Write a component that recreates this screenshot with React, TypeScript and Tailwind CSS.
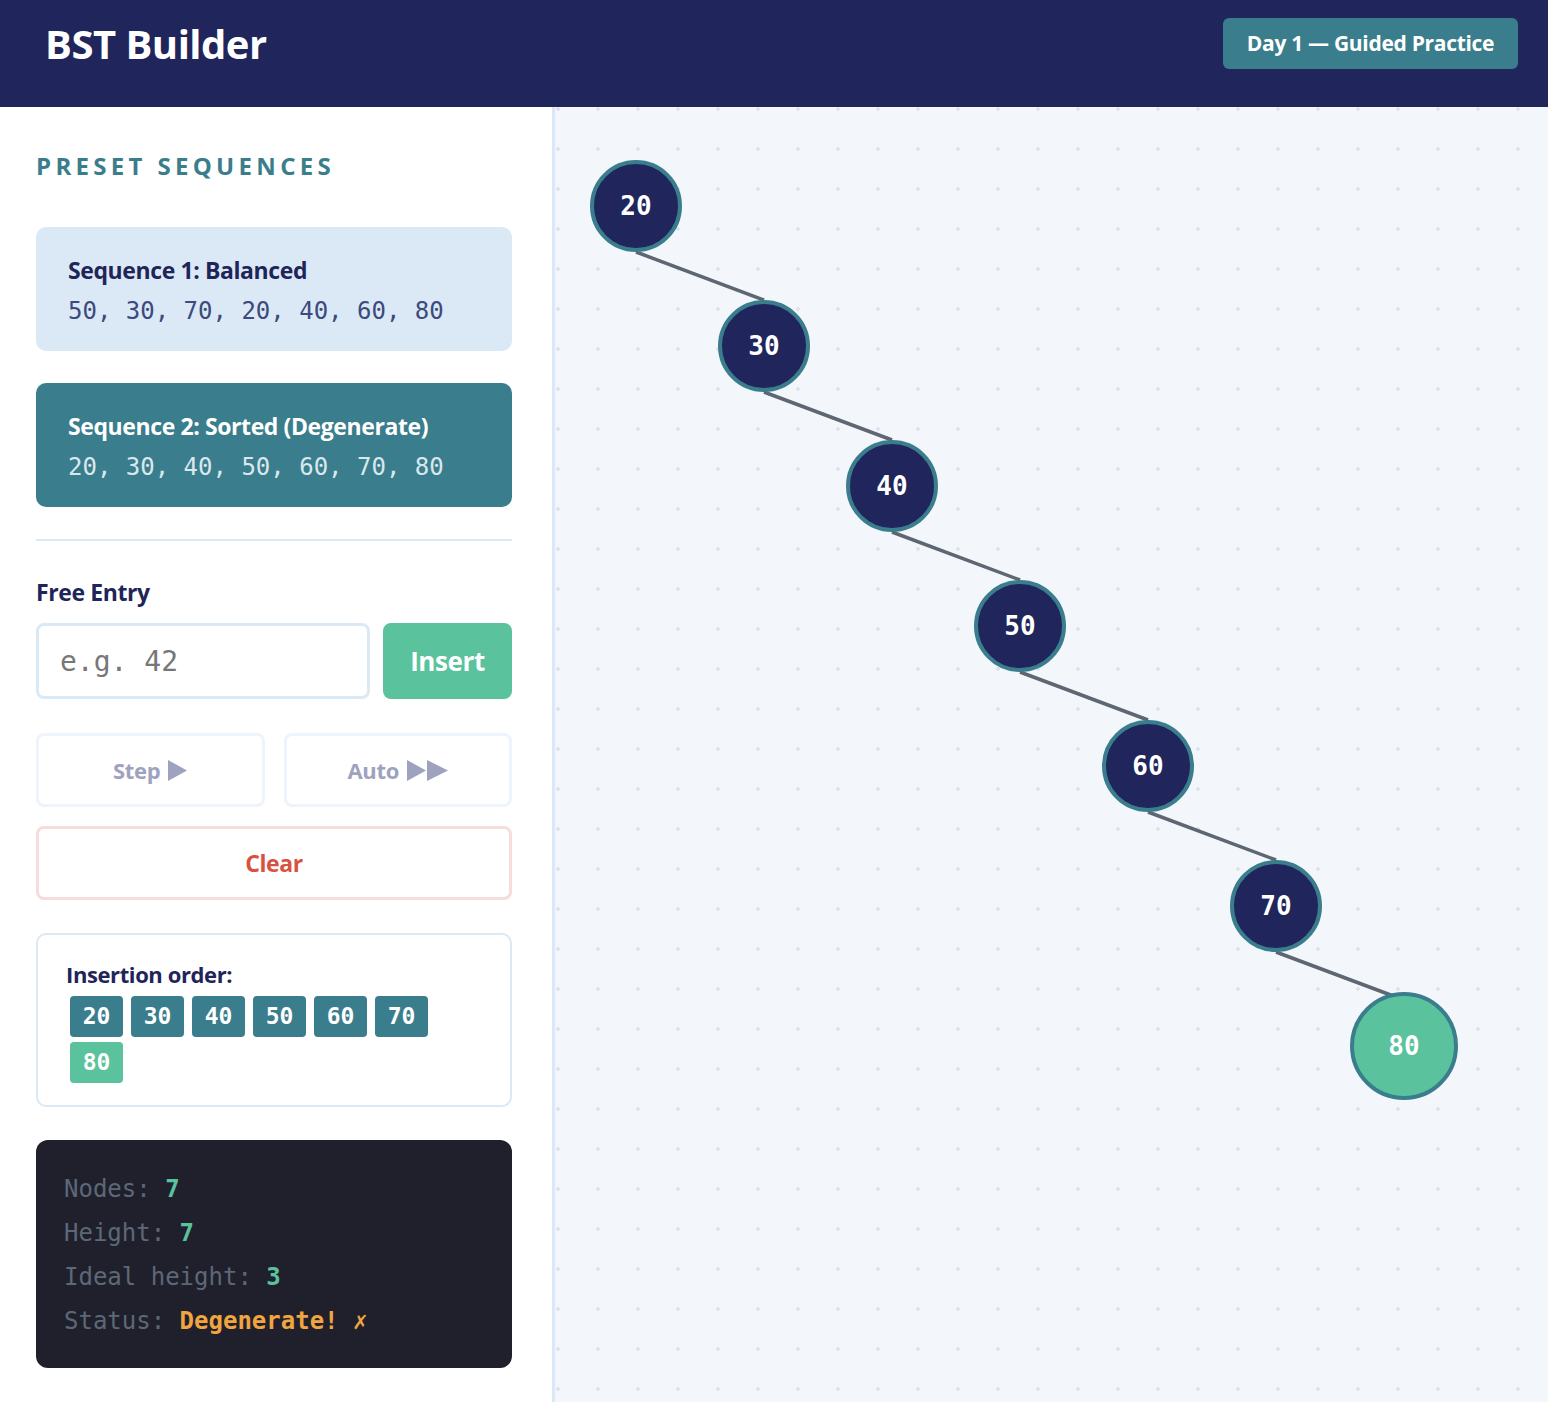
const sans = { fontFamily: '"Open Sans", Lato, sans-serif' };
const mono = { fontFamily: '"DejaVu Sans Mono", "Liberation Mono", monospace' };

type TreeNode = { value: number; x: number; y: number; latest?: boolean };

// node centres on the canvas, radius 46 (the newest one is scaled up)
const R = 46;
const nodes: TreeNode[] = [
  { value: 20, x: 81, y: 99 },
  { value: 30, x: 209, y: 239 },
  { value: 40, x: 337, y: 379 },
  { value: 50, x: 465, y: 519 },
  { value: 60, x: 593, y: 659 },
  { value: 70, x: 721, y: 799 },
  { value: 80, x: 849, y: 939, latest: true },
];

const order = [20, 30, 40, 50, 60, 70, 80];

const PlayIcon = ({ w = 20 }: { w?: number }) => (
  <svg width={w} height="21" viewBox={`0 0 ${w} 21`} className="fill-[#9ea2be]">
    <polygon points={`0,0 ${w},10.5 0,21`} />
  </svg>
);

const Header = () => (
  <header className="flex h-[107px] items-start justify-between bg-[#20255b] pl-[45px] pr-[30px] pt-[18px]">
    <div className="flex h-[51px] items-center">
      <h1 className="text-[40px] font-bold leading-none tracking-[-0.5px] text-white">BST Builder</h1>
    </div>
    <div className="flex h-[51px] w-[295px] items-center justify-center rounded-md bg-[#3a7d8c] text-[21px] font-bold tracking-[-0.3px] text-white">
      Day 1 — Guided Practice
    </div>
  </header>
);

const Sidebar = () => (
  <aside className="w-[555px] shrink-0 border-r-[3px] border-[#dbe9f5] bg-white pb-8 pl-9 pr-10 pt-[44px]">
    <h2 className="text-[24px] font-bold leading-[30px] tracking-[0.18em] text-[#3a7d8c]">PRESET SEQUENCES</h2>

    <div className="mt-[46px] flex flex-col gap-8">
      <div className="h-[124px] rounded-[10px] bg-[#dbe9f6] px-8 pt-7">
        <div className="text-[23px] font-bold leading-[30px] tracking-[-0.4px] text-[#1f2559]">Sequence 1: Balanced</div>
        <div style={mono} className="mt-[11px] text-[24px] leading-[30px] text-[#3d4a7c]">
          50, 30, 70, 20, 40, 60, 80
        </div>
      </div>
      <div className="h-[124px] rounded-[10px] bg-[#3a7d8c] px-8 pt-7">
        <div className="text-[23px] font-bold leading-[30px] tracking-[-0.4px] text-white">Sequence 2: Sorted (Degenerate)</div>
        <div style={mono} className="mt-[11px] text-[24px] leading-[30px] text-[#d9e8ec]">
          20, 30, 40, 50, 60, 70, 80
        </div>
      </div>
    </div>

    <div className="mt-8 h-[2px] bg-[#dbe9f5]" />

    <label className="mt-[36px] block text-[23px] font-bold leading-[30px] tracking-[-0.4px] text-[#1f2559]">Free Entry</label>
    <div className="mt-[16px] flex gap-[13px]">
      <input
        style={mono}
        placeholder="e.g. 42"
        className="h-[76px] min-w-0 flex-1 rounded-lg border-[3px] border-[#dbe9f5] px-[21px] text-[28px] text-[#1f2559] outline-none placeholder:text-[#777]"
      />
      <button className="h-[76px] w-[129px] rounded-lg bg-[#5ac29d] text-[26px] font-bold tracking-[-0.4px] text-white">Insert</button>
    </div>

    <div className="mt-[34px] grid grid-cols-2 gap-[19px]">
      <button className="flex h-[74px] items-center justify-center gap-2 rounded-lg border-[3px] border-[#eef4fb] text-[22px] font-bold tracking-[-0.3px] text-[#9ea2be]">
        Step <PlayIcon w={19} />
      </button>
      <button className="flex h-[74px] items-center justify-center gap-2 rounded-lg border-[3px] border-[#eef4fb] text-[22px] font-bold tracking-[-0.3px] text-[#9ea2be]">
        Auto
        <span className="flex gap-[1px]">
          <PlayIcon w={19} />
          <PlayIcon w={21} />
        </span>
      </button>
    </div>

    <button className="mt-[19px] flex h-[74px] w-full items-center justify-center rounded-lg border-[3px] border-[#f6dcdc] text-[23px] font-bold tracking-[-0.4px] text-[#d9523f]">
      Clear
    </button>

    <div className="mt-[33px] rounded-[10px] border-2 border-[#dbe9f5] pb-[22px] pl-7 pr-7 pt-[26px]">
      <div className="text-[22px] font-bold leading-[26px] tracking-[-0.4px] text-[#1f2559]">Insertion order:</div>
      <div className="mt-[9px] flex flex-wrap gap-x-2 gap-y-[5px] pl-1">
        {order.map((v, i) => (
          <span
            key={v}
            style={mono}
            className={
              'flex h-[41px] w-[53px] items-center justify-center rounded text-[23px] font-bold text-white ' +
              (i === order.length - 1 ? 'bg-[#5ac29d]' : 'bg-[#3a7d8c]')
            }
          >
            {v}
          </span>
        ))}
      </div>
    </div>

    <div style={mono} className="mt-[33px] rounded-xl bg-[#20202d] px-7 pb-[25px] pt-[27px] text-[24px] leading-[44px] text-[#5d6877]">
      <div>
        Nodes: <span className="font-bold text-[#5ac29d]">7</span>
      </div>
      <div>
        Height: <span className="font-bold text-[#5ac29d]">7</span>
      </div>
      <div>
        Ideal height: <span className="font-bold text-[#5ac29d]">3</span>
      </div>
      <div>
        Status: <span className="font-bold text-[#f0a540]">Degenerate! ✗</span>
      </div>
    </div>
  </aside>
);

const Canvas = () => (
  <main className="relative flex-1 overflow-hidden bg-[#f3f7fb] bg-[radial-gradient(circle,#dfe4ec_1.6px,transparent_2px)] bg-[length:40px_40px] bg-[position:-17px_-18px]">
    <svg className="absolute inset-0 h-full w-full">
      {nodes.slice(1).map((n, i) => (
        <line
          key={n.value}
          x1={nodes[i].x}
          y1={nodes[i].y + R}
          x2={n.x}
          y2={n.y - R}
          stroke="#5f6673"
          strokeWidth="3.5"
        />
      ))}
    </svg>
    {nodes.map((n) => {
      const size = n.latest ? 108 : R * 2;
      return (
        <div
          key={n.value}
          style={{ left: n.x - size / 2, top: n.y - size / 2, width: size, height: size, ...mono }}
          className={
            'absolute flex items-center justify-center rounded-full border-4 border-[#3a7d8c] text-[26px] font-bold text-white ' +
            (n.latest ? 'bg-[#5ac29d]' : 'bg-[#20255b]')
          }
        >
          {n.value}
        </div>
      );
    })}
  </main>
);

export default function App() {
  return (
    <div style={sans} className="flex min-h-screen flex-col">
      <Header />
      <div className="flex flex-1">
        <Sidebar />
        <Canvas />
      </div>
    </div>
  );
}
